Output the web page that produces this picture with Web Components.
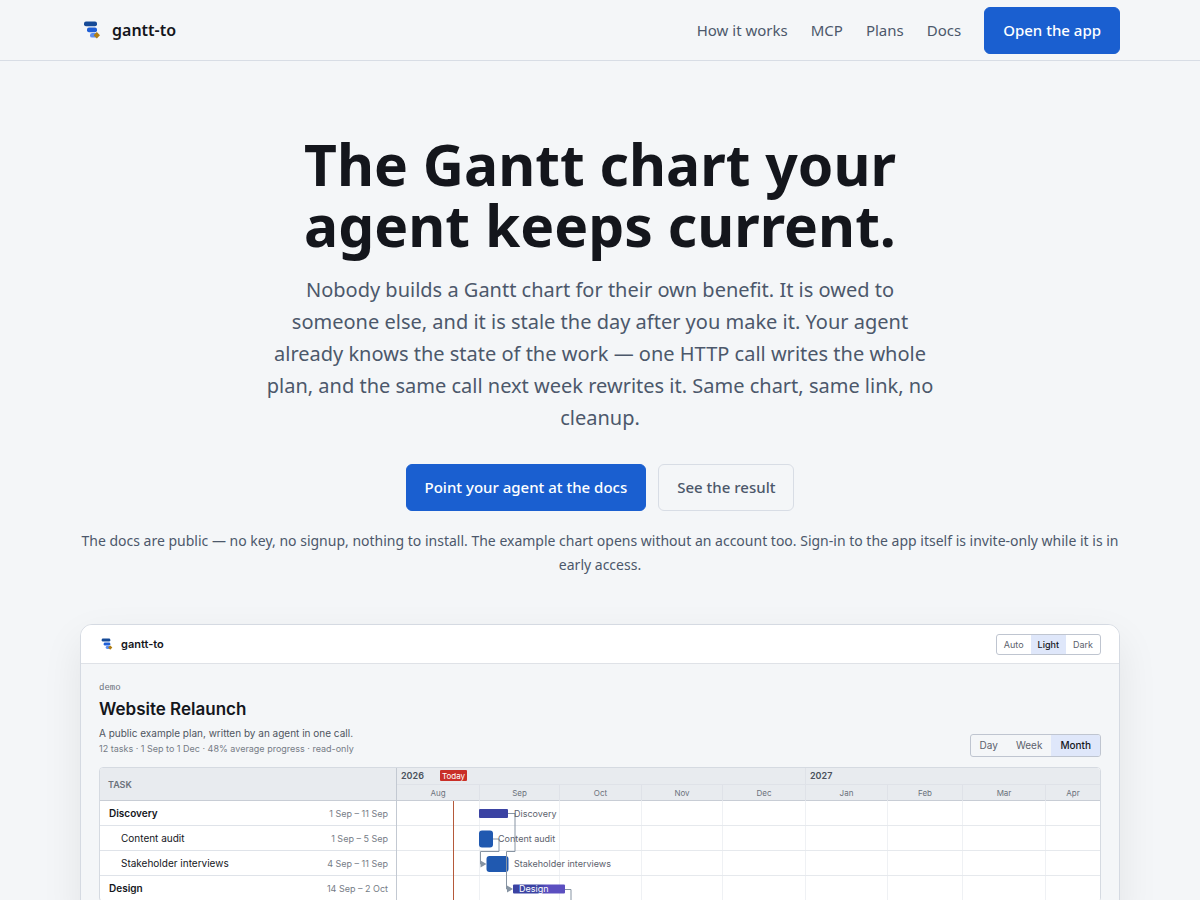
<!DOCTYPE html>
<html lang="en">
<head>
<meta charset="utf-8">
<meta name="viewport" content="width=device-width, initial-scale=1">
<title>gantt-to</title>
<style>
    :root {
        --bg: #f4f6f8;
        --ink: #14161c;
        --muted: #4c586b;
        --line: #d8dde5;
        --accent: #1a5fd0;
    }
    body {
        margin: 0;
        background: var(--bg);
        color: var(--ink);
        font-family: "Noto Sans", sans-serif;
    }
</style>
</head>
<body>

<gt-header>
    <gt-link href="#how">How it works</gt-link>
    <gt-link href="#mcp">MCP</gt-link>
    <gt-link href="#plans">Plans</gt-link>
    <gt-link href="#docs">Docs</gt-link>
    <gt-button href="#app" primary>Open the app</gt-button>
</gt-header>

<main>
    <gt-hero>
        <span slot="title">The Gantt chart your agent keeps current.</span>
        <span slot="lead">Nobody builds a Gantt chart for their own benefit. It is owed to someone else, and it is stale the day after you make it. Your agent already knows the state of the work — one HTTP call writes the whole plan, and the same call next week rewrites it. Same chart, same link, no cleanup.</span>
        <gt-button slot="actions" href="#docs" primary>Point your agent at the docs</gt-button>
        <gt-button slot="actions" href="#result">See the result</gt-button>
        <span slot="note">The docs are public — no key, no signup, nothing to install. The example chart opens without an account too. Sign-in to the app itself is invite-only while it is in early access.</span>
    </gt-hero>
    <gt-preview id="result"></gt-preview>
</main>

<script>
// Prefix for all component names
const prefix = 'gt';

class Logo extends HTMLElement {
    constructor() {
        super();
        this.attachShadow({mode: 'open'});
        this.shadowRoot.innerHTML = `
            <style>
                :host { display: flex; align-items: center; gap: var(--logo-gap, 8px); font-weight: 600; }
                svg { display: block; width: var(--logo-size, 24px); height: var(--logo-size, 24px); }
            </style>
            <svg viewBox="0 0 24 24" aria-hidden="true">
                <rect x="4" y="3.6" width="13" height="4.6" rx="2" fill="#164a97"/>
                <rect x="7" y="9.6" width="10" height="4.6" rx="2" fill="#1f5fd6"/>
                <rect x="10" y="15" width="8" height="4.6" rx="2.2" fill="#5b8def"/>
                <path d="M16.8 14.1 20 17.3 16.8 20.5 13.6 17.3Z" fill="#b07d12"/>
            </svg>
            <span><slot>gantt-to</slot></span>
        `;
    }
}

class Link extends HTMLElement {
    constructor() {
        super();
        this.attachShadow({mode: 'open'});
        this.shadowRoot.innerHTML = `
            <style>
                :host { display: block; }
                a { display: block; color: var(--muted); font-size: 15px; line-height: 24px; text-decoration: none; }
                a:hover { color: var(--ink); }
            </style>
            <a><slot></slot></a>
        `;
    }

    connectedCallback() {
        this.shadowRoot.querySelector('a').href = this.getAttribute('href');
    }
}

class ButtonLink extends HTMLElement {
    constructor() {
        super();
        this.attachShadow({mode: 'open'});
        this.shadowRoot.innerHTML = `
            <style>
                :host { display: block; }
                a {
                    display: block;
                    padding: 10px 18px;
                    border: 1px solid var(--line);
                    border-radius: 6px;
                    color: var(--muted);
                    font-size: 15px;
                    font-weight: 500;
                    line-height: 25px;
                    text-decoration: none;
                    white-space: nowrap;
                }
                :host([primary]) a { background: var(--accent); border-color: var(--accent); color: #fff; }
            </style>
            <a><slot></slot></a>
        `;
    }

    connectedCallback() {
        this.shadowRoot.querySelector('a').href = this.getAttribute('href');
    }
}

class Header extends HTMLElement {
    constructor() {
        super();
        this.attachShadow({mode: 'open'});
        this.shadowRoot.innerHTML = `
            <style>
                :host { display: block; border-bottom: 1px solid var(--line); }
                header {
                    display: flex;
                    align-items: center;
                    justify-content: space-between;
                    max-width: 1040px;
                    min-height: 60px;
                    margin: 0 auto;
                }
                nav { display: flex; align-items: center; gap: 23px; }
                gt-logo { font-size: 16px; line-height: 24px; }
            </style>
            <header>
                <gt-logo></gt-logo>
                <nav><slot></slot></nav>
            </header>
        `;
    }
}

class Hero extends HTMLElement {
    constructor() {
        super();
        this.attachShadow({mode: 'open'});
        this.shadowRoot.innerHTML = `
            <style>
                :host { display: block; max-width: 1040px; margin: 0 auto; padding: 73px 0 47px; text-align: center; }
                h1 { max-width: 680px; margin: 0 auto; font-size: 57px; font-weight: 700; line-height: 61px; }
                .lead { max-width: 680px; margin: 18px auto 0; color: var(--muted); font-size: 20px; line-height: 32px; }
                .actions { display: flex; flex-wrap: wrap; justify-content: center; gap: 12px; margin-top: 30px; }
                .note { margin: 18px 0 0; color: var(--muted); font-size: 14px; line-height: 24px; }
            </style>
            <h1><slot name="title"></slot></h1>
            <p class="lead"><slot name="lead"></slot></p>
            <div class="actions"><slot name="actions"></slot></div>
            <p class="note"><slot name="note"></slot></p>
        `;
    }
}

// Row of joined buttons, one of them pressed
class Segmented extends HTMLElement {
    constructor() {
        super();
        this.attachShadow({mode: 'open'});
    }

    connectedCallback() {
        const active = this.getAttribute('active');
        const buttons = this.getAttribute('options').split(',').map(name =>
            `<button type="button" aria-pressed="${name === active}">${name}</button>`
        ).join('');

        this.shadowRoot.innerHTML = `
            <style>
                :host { display: flex; border: 1px solid #bfc5d0; border-radius: 3px; overflow: hidden; }
                button {
                    margin: 0;
                    padding: var(--seg-pad, 3px 7px);
                    border: 0;
                    background: none;
                    color: #5c626d;
                    font: inherit;
                }
                button[aria-pressed="true"] { background: #dfe7fa; color: #14161c; font-weight: 500; }
            </style>
            ${buttons}
        `;
        this.shadowRoot.addEventListener('click', this._select);
    }

    _select = (event) => {
        if (event.target.tagName !== 'BUTTON') return;
        this.shadowRoot.querySelectorAll('button').forEach(button => {
            button.setAttribute('aria-pressed', button === event.target);
        });
    }
}

class TaskTable extends HTMLElement {
    constructor() {
        super();
        this.attachShadow({mode: 'open'});

        const tasks = [
            ['Discovery', '1 Sep – 11 Sep', true],
            ['Content audit', '1 Sep – 5 Sep', false],
            ['Stakeholder interviews', '4 Sep – 11 Sep', false],
            ['Design', '14 Sep – 2 Oct', true],
        ];
        const rows = tasks.map(([name, dates, group]) =>
            `<tr class="${group ? 'group' : ''}"><td>${name}</td><td class="dates">${dates}</td></tr>`
        ).join('');

        this.shadowRoot.innerHTML = `
            <style>
                :host { display: block; border-right: 1px solid #c3c9d2; }
                table { width: 100%; border-collapse: separate; border-spacing: 0; font-size: 10px; }
                th, td { box-sizing: border-box; padding: 0; border-bottom: 1px solid #dfe3e9; text-align: left; }
                th {
                    height: 33px;
                    padding-left: 8px;
                    background: #e8ebef;
                    border-color: #c8cdd5;
                    color: #6b717b;
                    font-size: 9px;
                    font-weight: 600;
                }
                td { height: 25px; padding-left: 21px; }
                .group td { padding-left: 9px; font-weight: 600; }
                td.dates, .group td.dates {
                    padding: 0 8px 0 0;
                    color: #767c86;
                    font-size: 9px;
                    font-weight: 400;
                    text-align: right;
                }
            </style>
            <table>
                <thead><tr><th colspan="2">TASK</th></tr></thead>
                <tbody>${rows}</tbody>
            </table>
        `;
    }
}

class Timeline extends HTMLElement {
    constructor() {
        super();
        this.attachShadow({mode: 'open'});

        const months = ['Aug', 'Sep', 'Oct', 'Nov', 'Dec', 'Jan', 'Feb', 'Mar', 'Apr'];
        const cells = months.map(() => '<i></i>').join('');

        this.shadowRoot.innerHTML = `
            <style>
                :host { display: block; position: relative; overflow: hidden; background: #fff; }
                .years, .months, .row {
                    display: grid;
                    grid-template-columns: 82px 80px 82px 81px 83px 82px 75px 83px 1fr;
                }
                .years, .months { background: #e8ebef; color: #6b717b; }
                .years { height: 16px; color: #4b515c; font-size: 9px; font-weight: 600; line-height: 16px; }
                .years span { padding-left: 4px; grid-column: span 5; }
                .years span + span { grid-column: span 4; border-left: 1px solid #dfe2e8; }
                .months {
                    height: 17px;
                    box-sizing: border-box;
                    border-top: 1px solid #dfe2e8;
                    border-bottom: 1px solid #c8cdd5;
                    font-size: 8px;
                    line-height: 16px;
                    text-align: center;
                }
                .months span + span { border-left: 1px solid #dfe2e8; }
                .row { box-sizing: border-box; height: 25px; border-bottom: 1px solid #e6e9ed; }
                .row i + i { border-left: 1px solid #eff1f4; }
                svg { position: absolute; left: 0; top: 0; width: 704px; height: 134px; font-size: 9px; }
                svg .label { fill: #5c626d; }
                .links { fill: none; stroke: #8794a3; stroke-width: 1; }
            </style>
            <div class="years"><span>2026</span><span>2027</span></div>
            <div class="months">${months.map(m => `<span>${m}</span>`).join('')}</div>
            ${`<div class="row">${cells}</div>`.repeat(4)}
            <svg viewBox="0 0 704 134">
                <defs>
                    <linearGradient id="done">
                        <stop offset=".5" stop-color="#3b43a3"/>
                        <stop offset=".65" stop-color="#5b4fc0"/>
                    </linearGradient>
                </defs>
                <rect x="56" y="33" width="1" height="101" fill="#b5593a"/>
                <rect x="43" y="2" width="27" height="11" rx="1" fill="#c92f28"/>
                <text x="56.5" y="10.5" fill="#fff" font-size="8" text-anchor="middle">Today</text>

                <rect x="82" y="41" width="29" height="9" rx="1" fill="#3b43a3"/>
                <rect x="82" y="62.5" width="14" height="17" rx="3" fill="#2059b0"/>
                <rect x="89.5" y="88" width="22" height="16" rx="3" fill="#2059b0"/>
                <rect x="116" y="116.500" width="52" height="9" rx="1" fill="url(#done)"/>

                <g class="links">
                    <path d="M111 45.500H118V83.500H109.500V121H113"/>
                    <path d="M96 71H102V83.500H83.500V96H86"/>
                    <path d="M168 121.500H174V134"/>
                </g>
                <path d="M83.500 92.500 89.500 96 83.500 99.500ZM110 117.500 116 121 110 124.500Z" fill="#8794a3"/>

                <text class="label" x="117" y="49">Discovery</text>
                <text class="label" x="101" y="74">Content audit</text>
                <text class="label" x="117" y="99">Stakeholder interviews</text>
                <text x="122" y="124" fill="#fff">Design</text>
            </svg>
        `;
    }
}

class Preview extends HTMLElement {
    constructor() {
        super();
        this.attachShadow({mode: 'open'});
        this.shadowRoot.innerHTML = `
            <style>
                :host {
                    display: block;
                    max-width: 1038px;
                    margin: 0 auto 64px;
                    border: 1px solid #d5dae2;
                    border-radius: 12px;
                    overflow: hidden;
                    box-shadow: 0 16px 40px rgba(20, 22, 28, .08);
                    font-family: Inter, sans-serif;
                }
                .bar {
                    display: flex;
                    align-items: center;
                    justify-content: space-between;
                    height: 38px;
                    padding: 0 18px;
                    background: #fff;
                    border-bottom: 1px solid #dfe2e7;
                }
                .bar gt-logo { --logo-size: 16px; --logo-gap: 6px; font-size: 11px; }
                .bar gt-segmented { font-size: 9px; line-height: 13px; }
                .body { padding: 18px; }
                .top { display: flex; align-items: flex-end; justify-content: space-between; }
                .top gt-segmented { --seg-pad: 3px 9px; font-size: 10px; line-height: 15px; }
                p, h2 { margin: 0; }
                .slug { color: #6b717b; font: 9px/12px "Liberation Mono", monospace; }
                h2 { margin-top: 4px; font-size: 17px; font-weight: 600; line-height: 22px; }
                .about { margin-top: 5px; color: #4f5560; font-size: 10px; line-height: 16px; }
                .meta { color: #767c86; font-size: 9px; line-height: 16px; }
                .chart {
                    display: grid;
                    grid-template-columns: 297px 1fr;
                    margin-top: 10px;
                    background: #fff;
                    border: 1px solid #d5dae1;
                    border-radius: 4px;
                    overflow: hidden;
                }
            </style>
            <div class="bar">
                <gt-logo></gt-logo>
                <gt-segmented options="Auto,Light,Dark" active="Light"></gt-segmented>
            </div>
            <div class="body">
                <div class="top">
                    <div>
                        <p class="slug">demo</p>
                        <h2>Website Relaunch</h2>
                        <p class="about">A public example plan, written by an agent in one call.</p>
                        <p class="meta">12 tasks · 1 Sep to 1 Dec · 48% average progress · read-only</p>
                    </div>
                    <gt-segmented options="Day,Week,Month" active="Month"></gt-segmented>
                </div>
                <div class="chart">
                    <gt-task-table></gt-task-table>
                    <gt-timeline></gt-timeline>
                </div>
            </div>
        `;
    }
}

customElements.define(`${prefix}-logo`, Logo);
customElements.define(`${prefix}-link`, Link);
customElements.define(`${prefix}-button`, ButtonLink);
customElements.define(`${prefix}-header`, Header);
customElements.define(`${prefix}-hero`, Hero);
customElements.define(`${prefix}-segmented`, Segmented);
customElements.define(`${prefix}-task-table`, TaskTable);
customElements.define(`${prefix}-timeline`, Timeline);
customElements.define(`${prefix}-preview`, Preview);
</script>
</body>
</html>
